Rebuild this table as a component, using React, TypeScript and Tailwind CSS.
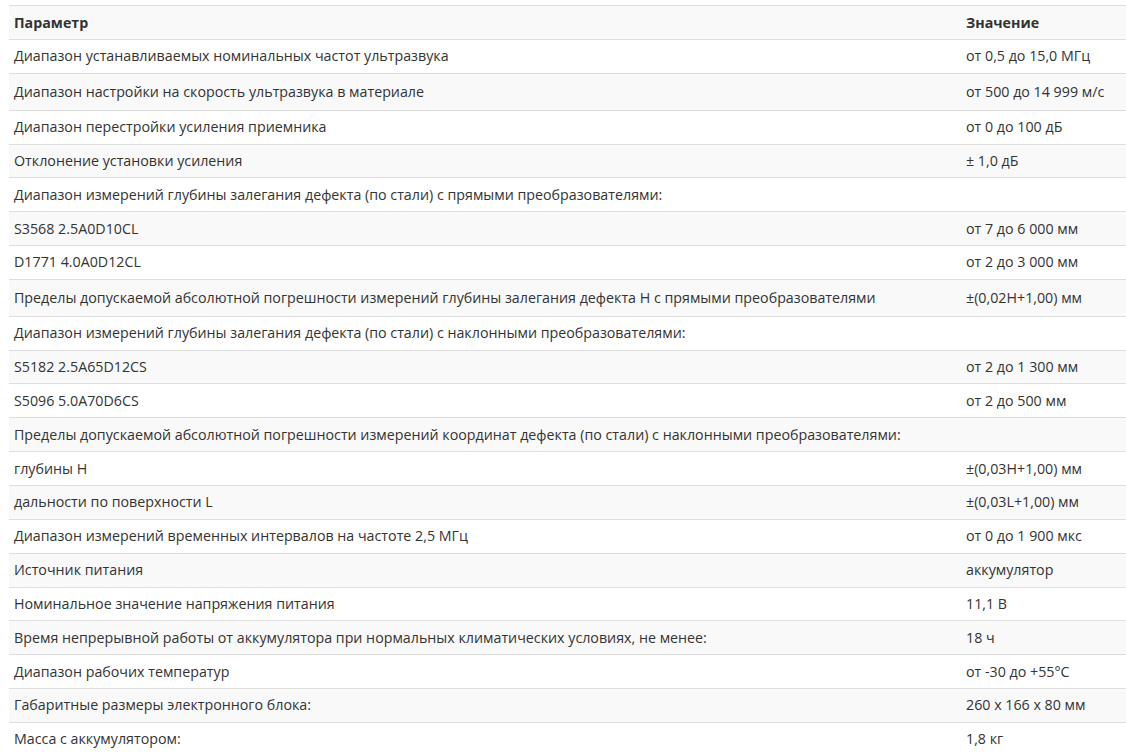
import React from 'react';

type Row = { name: string; value: string; tall?: boolean };

const rows: Row[] = [
  { name: 'Диапазон устанавливаемых номинальных частот ультразвука', value: 'от 0,5 до 15,0 МГц' },
  { name: 'Диапазон настройки на скорость ультразвука в материале', value: 'от 500 до 14 999 м/с', tall: true },
  { name: 'Диапазон перестройки усиления приемника', value: 'от 0 до 100 дБ' },
  { name: 'Отклонение установки усиления', value: '± 1,0 дБ' },
  { name: 'Диапазон измерений глубины залегания дефекта (по стали) с прямыми преобразователями:', value: '' },
  { name: 'S3568 2.5A0D10CL', value: 'от 7 до 6 000 мм' },
  { name: 'D1771 4.0A0D12CL', value: 'от 2 до 3 000 мм' },
  {
    name: 'Пределы допускаемой абсолютной погрешности измерений глубины залегания дефекта Н с прямыми преобразователями',
    value: '±(0,02Н+1,00) мм',
    tall: true,
  },
  { name: 'Диапазон измерений глубины залегания дефекта (по стали) с наклонными преобразователями:', value: '' },
  { name: 'S5182 2.5A65D12CS', value: 'от 2 до 1 300 мм' },
  { name: 'S5096 5.0A70D6CS', value: 'от 2 до 500 мм' },
  {
    name: 'Пределы допускаемой абсолютной погрешности измерений координат дефекта (по стали) с наклонными преобразователями:',
    value: '',
  },
  { name: 'глубины Н', value: '±(0,03Н+1,00) мм' },
  { name: 'дальности по поверхности L', value: '±(0,03L+1,00) мм' },
  { name: 'Диапазон измерений временных интервалов на частоте 2,5 МГц', value: 'от 0 до 1 900 мкс' },
  { name: 'Источник питания', value: 'аккумулятор' },
  { name: 'Номинальное значение напряжения питания', value: '11,1 В' },
  {
    name: 'Время непрерывной работы от аккумулятора при нормальных климатических условиях, не менее:',
    value: '18 ч',
  },
  { name: 'Диапазон рабочих температур', value: 'от -30 до +55°С' },
  { name: 'Габаритные размеры электронного блока:', value: '260 х 166 х 80 мм' },
  { name: 'Масса с аккумулятором:', value: '1,8 кг' },
];

export default function App() {
  return (
    <div className="min-h-screen bg-white pl-[9px] pt-[5px] font-['Open_Sans',sans-serif] text-[14.25px] text-[#333]">
      <table className="w-full border-collapse">
        <thead>
          <tr className="h-[34px] border-y border-[#dedede] bg-[#f9f9f9]">
            <th className="w-[952px] px-[5px] text-left font-bold">Параметр</th>
            <th className="px-[5px] text-left font-bold">Значение</th>
          </tr>
        </thead>
        <tbody>
          {rows.map((row, i) => (
            <tr
              key={i}
              className={
                (row.tall ? 'h-[36.85px] ' : 'h-[33.85px] ') +
                'border-b border-[#dedede] ' +
                (i % 2 === 1 ? 'bg-[#f9f9f9]' : 'bg-white')
              }
            >
              <td className="px-[5px] leading-5">{row.name}</td>
              <td className="px-[5px] leading-5">{row.value}</td>
            </tr>
          ))}
        </tbody>
      </table>
    </div>
  );
}
